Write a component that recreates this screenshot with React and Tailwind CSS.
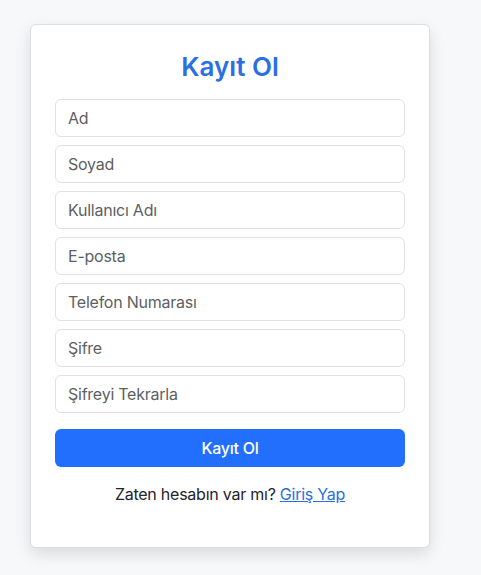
import { useState } from "react";

const fields = [
  { name: "ad", placeholder: "Ad", type: "text" },
  { name: "soyad", placeholder: "Soyad", type: "text" },
  { name: "kullaniciAdi", placeholder: "Kullanıcı Adı", type: "text" },
  { name: "eposta", placeholder: "E-posta", type: "email" },
  { name: "telefon", placeholder: "Telefon Numarası", type: "tel" },
  { name: "sifre", placeholder: "Şifre", type: "password" },
  { name: "sifreTekrar", placeholder: "Şifreyi Tekrarla", type: "password" },
];

export default function App() {
  const [form, setForm] = useState({});

  const handleChange = (e) => setForm({ ...form, [e.target.name]: e.target.value });

  return (
    <div className="min-h-screen bg-[#f7f8fa] pt-6 pl-[30px] font-['Inter',sans-serif] tracking-[-0.015em] text-[#212529]">
      {/* ── Register card ───────────────────────────────── */}
      <div className="w-[400px] rounded-md border border-[#dcdde0] bg-white px-6 pt-6 pb-[41px] shadow-[0_6px_16px_rgba(0,0,0,0.12)]">
        <h2 className="mt-px mb-[15px] text-center text-[26px] leading-[34px] font-semibold tracking-normal text-[#2b6fe3]">Kayıt Ol</h2>

        <form onSubmit={(e) => e.preventDefault()} className="flex flex-col gap-2">
          {fields.map((f) => (
            <input
              key={f.name}
              name={f.name}
              type={f.type}
              value={form[f.name] || ""}
              onChange={handleChange}
              placeholder={f.placeholder}
              className="h-[38px] w-full rounded-md border border-[#dee2e6] bg-white px-3 text-base text-[#212529] outline-none placeholder:text-[#5c5f63]"
            />
          ))}
          <button
            type="submit"
            className="mt-2 h-[38px] w-full rounded-md bg-[#236ffd] text-base font-medium text-white"
          >
            Kayıt Ol
          </button>
        </form>

        <p className="mt-[15px] text-center text-base leading-6">
          Zaten hesabın var mı?{" "}
          <a href="#" className="text-[#2b6fe3] underline">Giriş Yap</a>
        </p>
      </div>
    </div>
  );
}
